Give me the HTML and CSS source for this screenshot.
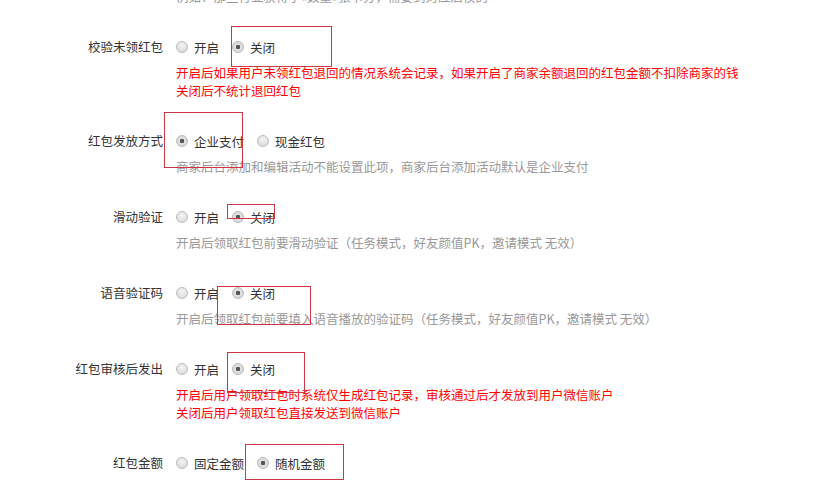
FILE: index.html
```html
<!DOCTYPE html>
<html lang="zh-CN">
<head>
    <meta charset="UTF-8">
    <title>红包设置</title>
    <link rel="stylesheet" href="styles.css">
</head>
<body>
    <div class="form">
        <p class="tip tip-top">例如：那些行业获得了«数量»张卡分，需要到对应后模的</p>

        <div class="group">
            <label class="name">校验未领红包</label>
            <div class="field">
                <div class="options">
                    <label class="opt"><input type="radio" name="check">开启</label>
                    <label class="opt"><input type="radio" name="check" checked>关闭</label>
                </div>
                <p class="tip red">开启后如果用户未领红包退回的情况系统会记录，如果开启了商家余额退回的红包金额不扣除商家的钱<br>关闭后不统计退回红包</p>
            </div>
        </div>

        <div class="group">
            <label class="name">红包发放方式</label>
            <div class="field">
                <div class="options">
                    <label class="opt"><input type="radio" name="pay" checked>企业支付</label>
                    <label class="opt"><input type="radio" name="pay">现金红包</label>
                </div>
                <p class="tip">商家后台添加和编辑活动不能设置此项，商家后台添加活动默认是企业支付</p>
            </div>
        </div>

        <div class="group">
            <label class="name">滑动验证</label>
            <div class="field">
                <div class="options">
                    <label class="opt"><input type="radio" name="slide">开启</label>
                    <label class="opt"><input type="radio" name="slide" checked>关闭</label>
                </div>
                <p class="tip">开启后领取红包前要滑动验证（任务模式，好友颜值PK，邀请模式 无效）</p>
            </div>
        </div>

        <div class="group">
            <label class="name">语音验证码</label>
            <div class="field">
                <div class="options">
                    <label class="opt"><input type="radio" name="voice">开启</label>
                    <label class="opt"><input type="radio" name="voice" checked>关闭</label>
                </div>
                <p class="tip">开启后领取红包前要填入语音播放的验证码（任务模式，好友颜值PK，邀请模式 无效）</p>
            </div>
        </div>

        <div class="group">
            <label class="name">红包审核后发出</label>
            <div class="field">
                <div class="options">
                    <label class="opt"><input type="radio" name="audit">开启</label>
                    <label class="opt"><input type="radio" name="audit" checked>关闭</label>
                </div>
                <p class="tip red">开启后用户领取红包时系统仅生成红包记录，审核通过后才发放到用户微信账户<br>关闭后用户领取红包直接发送到微信账户</p>
            </div>
        </div>

        <div class="group">
            <label class="name">红包金额</label>
            <div class="field">
                <div class="options">
                    <label class="opt"><input type="radio" name="amount">固定金额</label>
                    <label class="opt"><input type="radio" name="amount" checked>随机金额</label>
                </div>
            </div>
        </div>
    </div>

    <!-- red marks drawn over the screenshot -->
    <div class="mark" style="left: 231px; top: 26px; width: 101px; height: 41px;"></div>
    <div class="mark" style="left: 164px; top: 112px; width: 79px; height: 56px;"></div>
    <div class="mark" style="left: 227px; top: 204px; width: 48px; height: 15px;"></div>
    <div class="mark" style="left: 217px; top: 286px; width: 94px; height: 39px;"></div>
    <div class="mark" style="left: 227px; top: 352px; width: 78px; height: 41px;"></div>
    <div class="mark" style="left: 245px; top: 444px; width: 99px; height: 36px;"></div>
</body>
</html>
```

FILE: styles.css
```css
body {
    margin: 0;
    position: relative;
    background: #fff;
    color: #333;
    font-family: "Noto Sans CJK SC", "Microsoft YaHei", sans-serif;
    font-size: 12.5px;
    overflow: hidden;
}
.form {
    margin-top: -12px;
}
.tip {
    margin: 0;
    line-height: 18px;
    color: #999;
}
.tip-top {
    margin-left: 176px;
}
.tip.red {
    color: #f00;
}
.group {
    display: flex;
    margin-top: 24px;
}
.name {
    width: 163px;
    text-align: right;
    line-height: 34px;
    flex-shrink: 0;
}
.field {
    margin-left: 13px;
}
.options {
    display: flex;
    height: 34px;
    align-items: center;
}
.opt {
    display: flex;
    align-items: center;
    margin-right: 13px;
}
input[type="radio"] {
    -webkit-appearance: none;
    appearance: none;
    width: 12px;
    height: 12px;
    margin: 0 6px 0 0;
    border: 1px solid #bcbcbc;
    border-radius: 50%;
    background: radial-gradient(circle at 50% 35%, #f4f4f4 0%, #d6d6d6 100%);
    box-sizing: border-box;
    flex-shrink: 0;
}
input[type="radio"]:checked {
    background: radial-gradient(circle, #555 0, #555 2px, #e2e2e2 2.5px, #cfcfcf 100%);
}
.mark {
    position: absolute;
    box-sizing: border-box;
    border: 1px solid #cf3544;
}
```
